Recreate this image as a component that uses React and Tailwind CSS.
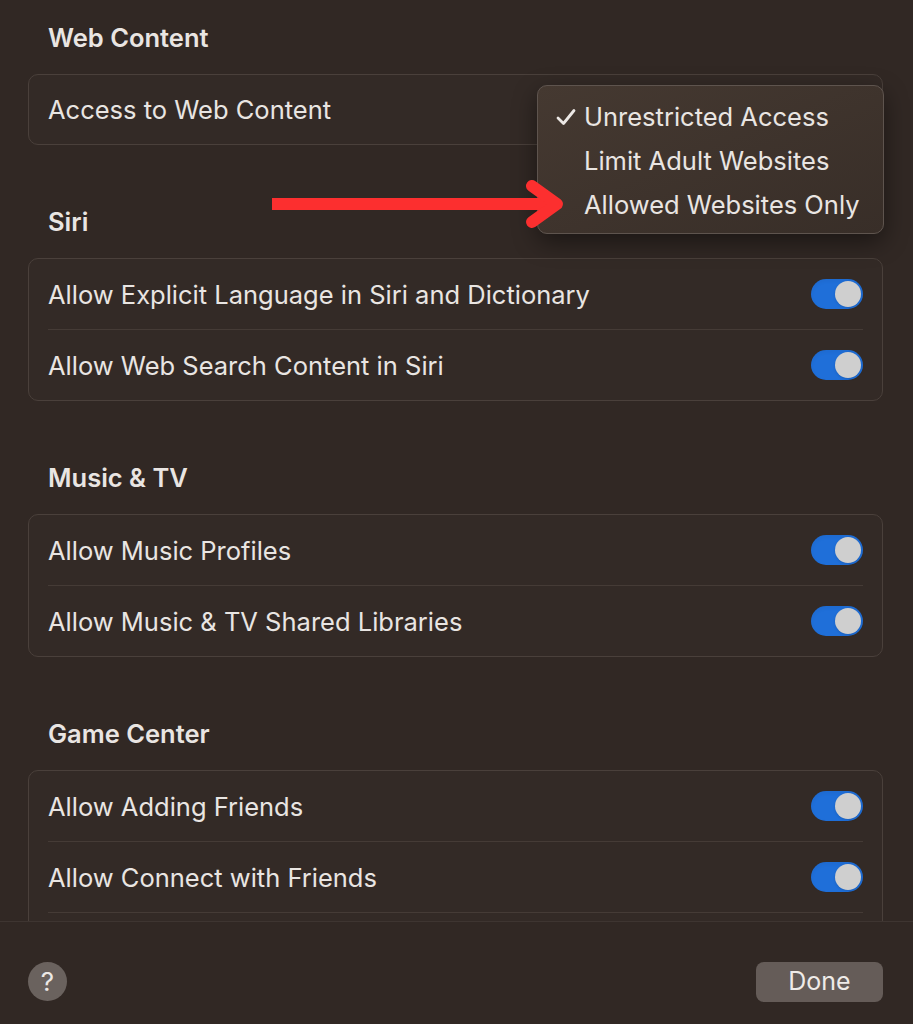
import React from "react";

const sections = [
  { title: "Web Content", rows: ["Access to Web Content"], toggles: false },
  {
    title: "Siri",
    rows: ["Allow Explicit Language in Siri and Dictionary", "Allow Web Search Content in Siri"],
    toggles: true,
  },
  {
    title: "Music & TV",
    rows: ["Allow Music Profiles", "Allow Music & TV Shared Libraries"],
    toggles: true,
  },
  {
    title: "Game Center",
    rows: ["Allow Adding Friends", "Allow Connect with Friends", ""],
    toggles: true,
  },
];

function Toggle() {
  return (
    <div className="w-[52px] h-[30px] rounded-full bg-[#1f6fd9] flex items-center justify-end pr-[2px] shadow-inner">
      <div className="w-[26px] h-[26px] rounded-full bg-[#cfcfcf] shadow" />
    </div>
  );
}

function Card({ rows, toggles, single }) {
  return (
    <div className="rounded-[10px] border border-[#4a403b] bg-[#332a26]">
      {rows.map((label, i) => (
        <div key={i}>
          {i > 0 && <div className="mx-[19px] h-px bg-[#453b36]" />}
          <div
            className={`flex items-center justify-between px-[19px] ${single ? "h-[69px]" : "h-[70px]"}`}
          >
            <span className="pt-[2px]">{label}</span>
            {toggles && label && <Toggle />}
          </div>
        </div>
      ))}
    </div>
  );
}

function Check() {
  return (
    <svg width="22" height="18" viewBox="0 0 22 18" className="ml-[17px]">
      <polyline
        points="3,10 8.5,15.5 19,2.5"
        fill="none"
        stroke="#ece8e5"
        strokeWidth="2.8"
        strokeLinecap="round"
        strokeLinejoin="round"
      />
    </svg>
  );
}

function Menu() {
  const items = ["Unrestricted Access", "Limit Adult Websites", "Allowed Websites Only"];
  return (
    <div className="absolute left-[537px] top-[85px] w-[347px] h-[149px] rounded-[10px] border border-[#5e544e] bg-gradient-to-br from-[#453931] to-[#382e28] shadow-[0_8px_24px_rgba(0,0,0,0.45)] pt-[9px]">
      {items.map((item, i) => (
        <div key={item} className="h-[44px] flex items-center">
          <span className="w-[46px] flex items-center">{i === 0 && <Check />}</span>
          <span>{item}</span>
        </div>
      ))}
    </div>
  );
}

function Arrow() {
  return (
    <svg className="absolute left-0 top-0 pointer-events-none" width="913" height="300">
      <line x1="272" y1="204" x2="552" y2="204" stroke="#fc2f2f" strokeWidth="12" />
      <polyline
        points="532,186 557,204 532,222"
        fill="none"
        stroke="#fc2f2f"
        strokeWidth="12"
        strokeLinecap="round"
        strokeLinejoin="round"
      />
    </svg>
  );
}

export default function App() {
  return (
    <div
      className="relative w-[913px] h-[1024px] bg-[#312824] text-[#e9e5e2] text-[25.5px] flex flex-col overflow-hidden"
      style={{ fontFamily: "Inter, 'Liberation Sans', sans-serif" }}
    >
      <div className="h-[921px] overflow-hidden pl-[28px] pr-[30px] pt-[22px]">
        {sections.map((s, i) => (
          <section key={s.title} className={i > 0 ? "mt-[61px]" : ""}>
            <h2 className="px-[20px] h-[32px] leading-[32px] mb-[20px] font-semibold">{s.title}</h2>
            <Card rows={s.rows} toggles={s.toggles} single={s.rows.length === 1} />
          </section>
        ))}
      </div>

      <footer className="flex-1 border-t border-[#3e3531] pl-[28px] pr-[30px] pt-[40px] flex items-start justify-between">
        <div className="w-[39px] h-[39px] rounded-full bg-[#6a625e] flex items-center justify-center text-[26px] text-[#ece8e5]">
          ?
        </div>
        <button className="w-[127px] h-[40px] rounded-[8px] bg-[#655c58] text-[#efebe8] text-[25px]">
          Done
        </button>
      </footer>

      <Menu />
      <Arrow />
    </div>
  );
}
